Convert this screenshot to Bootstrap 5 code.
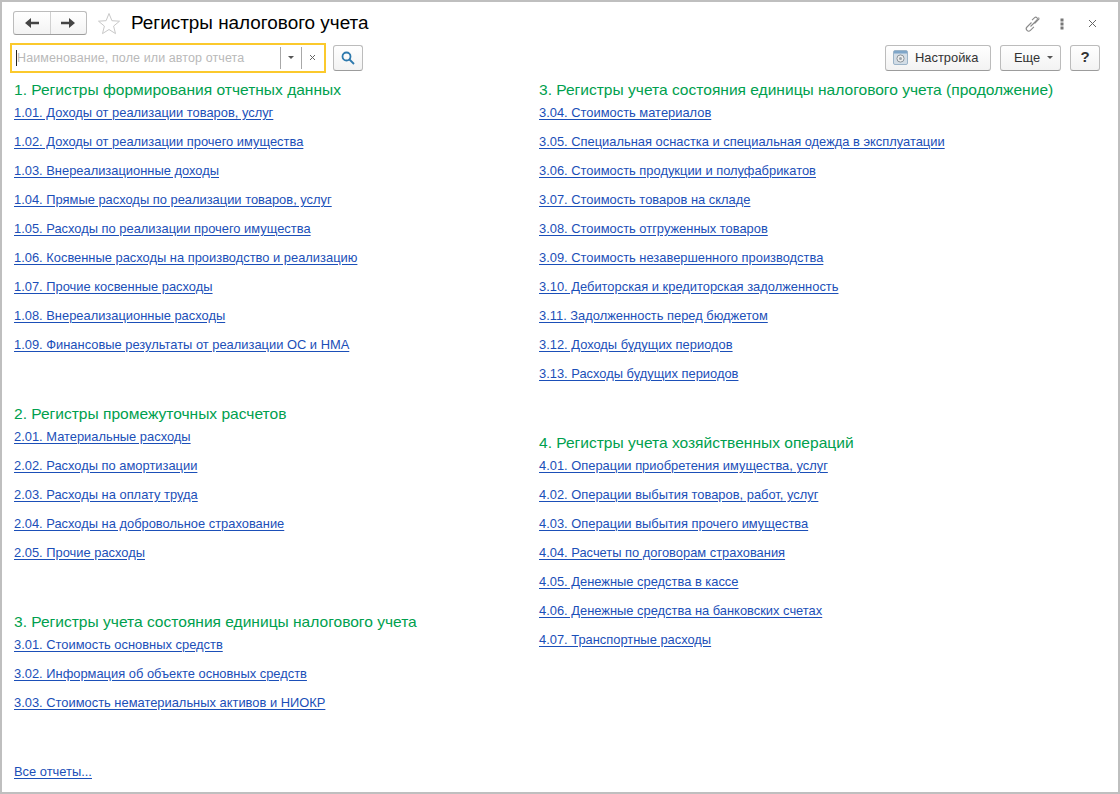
<!DOCTYPE html>
<html lang="ru">
<head>
<meta charset="utf-8">
<title>Регистры налогового учета</title>
<link rel="stylesheet" href="https://cdn.jsdelivr.net/npm/bootstrap@5.3.0/dist/css/bootstrap.min.css">
<style>
html,body{height:100%;margin:0;background:#fff}
body{font-family:"Liberation Sans",Arial,sans-serif;font-size:13px;color:#333;overflow:hidden}
.win{width:1120px;height:794px;border:2px solid #bfbfbf;background:#fff;padding:8px 10px 0 12px}
.titlebar{height:27px;margin-left:-1px}
.btn1c{background:linear-gradient(#fff,#f3f3f3);border:1px solid #bcbcbc;border-bottom-color:#9c9c9c;border-radius:3px;color:#333;font-size:12.9px;height:26px;padding:0;display:flex;align-items:center;justify-content:center;box-shadow:none}
.navgroup{width:74px;height:24px;margin-top:-1px}
.navgroup span{flex:1 1 0;height:100%;display:flex;align-items:center;justify-content:center}
.navgroup span+span{border-left:1px solid #d0d0d0}
.titletext{font-size:18.9px;color:#000;line-height:24px;margin-left:10px;margin-top:-1px}
.star{margin-left:10px}
.tools{height:33px;margin-left:-4px;margin-top:4px}
.searchbox{width:316px;height:30px;border:2px solid #fbc92c;display:flex;align-items:center;padding:3px 0 3px 4px}
.searchtext{flex:1;color:#b9b9b9;font-size:12.5px;letter-spacing:.1px;border-left:1px solid #222;height:16px;line-height:16px;white-space:nowrap}
.seg{width:21px;height:22px;border-left:1px solid #a8a8a8;display:flex;align-items:center;justify-content:center;color:#555}
.find{width:30px;margin-left:7px}
.setup{width:106px;gap:7px;justify-content:flex-start;padding-left:7px}
.more{width:61px;margin-left:9px;gap:7px;justify-content:flex-start;padding-left:13px}
.help{width:30px;margin-left:9px;margin-right:8px;font-weight:700;font-size:15px;color:#333}
.caret1c{width:0;height:0;border:3px solid transparent;border-top:3px solid #555;border-bottom:0}
.cols{height:712px;margin-top:6px}
.colleft{width:525px}
.colright{width:540px}
.group+.group{margin-top:45px}
.grouphead{height:18px;line-height:20px;font-size:15.55px;color:#00a04e;font-weight:400;margin:0}
.rowlink{height:29px;display:flex;align-items:center}
.rowlink a,.allrep{color:#1b4fb8;text-decoration:underline;text-underline-offset:2px;font-size:12.9px;white-space:nowrap}
.allrep{display:block;line-height:16px}
.foot{margin-top:auto;padding-bottom:12px}
</style>
</head>
<body>
<div class="win d-flex flex-column">
  <div class="titlebar d-flex align-items-center">
    <div class="btn1c navgroup">
      <span><svg width="14" height="10" viewBox="0 0 14 10" fill="#444"><path d="M0 5 6 0v3.800h8v2.400H6V10z"/></svg></span>
      <span><svg width="14" height="10" viewBox="0 0 14 10" fill="#444"><path d="M14 5 8 0v3.800H0v2.400h8V10z"/></svg></span>
    </div>
    <svg class="star" width="24" height="24" viewBox="0 0 24 24"><path d="M12 1.500l2.900 7.200 7.600.5-5.900 4.900 1.900 7.500L12 17.500l-6.500 4.100 1.900-7.500L1.500 9.200l7.600-.5z" fill="#fff" stroke="#c8c8c8" stroke-width="1"/></svg>
    <div class="titletext">Регистры налогового учета</div>
    <div class="ms-auto d-flex align-items-center">
      <svg width="18" height="18" viewBox="0 0 18 18" fill="none" stroke="#8a8a8a" stroke-width="1.100"><path d="M7.500 7.500 3 12a2.400 2.400 0 0 0 3.400 3.400l3.500-3.500"/><path d="M6.500 11.500 13 5a1.700 1.700 0 0 0-2.400-2.400L8 5.200"/><path d="M10.500 8.500 15 4a2.400 2.400 0 0 0-.5-1.500"/></svg>
      <svg style="margin-left:18px" width="4" height="12" viewBox="0 0 4 12" fill="#777"><rect x=".5" y=".5" width="3" height="3"/><rect x=".5" y="4.500" width="3" height="3"/><rect x=".5" y="8.500" width="3" height="3"/></svg>
      <svg style="margin-left:24px;margin-right:11px" width="9" height="9" viewBox="0 0 9 9" stroke="#666" stroke-width="1"><path d="M1 1l7 7M8 1l-7 7"/></svg>
    </div>
  </div>
  <div class="tools d-flex align-items-center">
    <div class="searchbox">
      <div class="searchtext">Наименование, поле или автор отчета</div>
      <div class="seg"><span class="caret1c"></span></div>
      <div class="seg"><svg width="7" height="7" viewBox="0 0 7 7" stroke="#666" stroke-width="1"><path d="M1 1l5 5M6 1 1 6"/></svg></div>
      <div style="width:2px"></div>
    </div>
    <div class="btn1c find"><svg width="14" height="14" viewBox="0 0 14 14" fill="none" stroke="#2d79ad" stroke-width="1.800"><circle cx="5.500" cy="5.500" r="4"/><path d="M8.500 8.500l4.500 4.500"/></svg></div>
    <div class="btn1c setup ms-auto">
      <svg width="15" height="15" viewBox="0 0 15 15"><rect x=".5" y=".5" width="14" height="14" rx="1.500" fill="#d3dde6" stroke="#9cb4c8"/><rect x="1" y="1" width="13" height="2.500" fill="#7fa6c9"/><circle cx="7.500" cy="8.500" r="3.600" fill="#eee" stroke="#8b949b"/><circle cx="7.500" cy="8.500" r="1.500" fill="#9aa3aa"/></svg>
      <span>Настройка</span>
    </div>
    <div class="btn1c more"><span>Еще</span><span class="caret1c"></span></div>
    <div class="btn1c help">?</div>
  </div>
  <div class="cols d-flex">
    <div class="colleft d-flex flex-column">
      <section class="group">
        <h2 class="grouphead">1. Регистры формирования отчетных данных</h2>
        <div class="rowlink"><a href="#">1.01. Доходы от реализации товаров, услуг</a></div>
        <div class="rowlink"><a href="#">1.02. Доходы от реализации прочего имущества</a></div>
        <div class="rowlink"><a href="#">1.03. Внереализационные доходы</a></div>
        <div class="rowlink"><a href="#">1.04. Прямые расходы по реализации товаров, услуг</a></div>
        <div class="rowlink"><a href="#">1.05. Расходы по реализации прочего имущества</a></div>
        <div class="rowlink"><a href="#">1.06. Косвенные расходы на производство и реализацию</a></div>
        <div class="rowlink"><a href="#">1.07. Прочие косвенные расходы</a></div>
        <div class="rowlink"><a href="#">1.08. Внереализационные расходы</a></div>
        <div class="rowlink"><a href="#">1.09. Финансовые результаты от реализации ОС и НМА</a></div>
      </section>
      <section class="group">
        <h2 class="grouphead">2. Регистры промежуточных расчетов</h2>
        <div class="rowlink"><a href="#">2.01. Материальные расходы</a></div>
        <div class="rowlink"><a href="#">2.02. Расходы по амортизации</a></div>
        <div class="rowlink"><a href="#">2.03. Расходы на оплату труда</a></div>
        <div class="rowlink"><a href="#">2.04. Расходы на добровольное страхование</a></div>
        <div class="rowlink"><a href="#">2.05. Прочие расходы</a></div>
      </section>
      <section class="group">
        <h2 class="grouphead">3. Регистры учета состояния единицы налогового учета</h2>
        <div class="rowlink"><a href="#">3.01. Стоимость основных средств</a></div>
        <div class="rowlink"><a href="#">3.02. Информация об объекте основных средств</a></div>
        <div class="rowlink"><a href="#">3.03. Стоимость нематериальных активов и НИОКР</a></div>
      </section>
      <div class="foot"><a class="allrep" href="#">Все отчеты...</a></div>
    </div>
    <div class="colright">
      <section class="group">
        <h2 class="grouphead">3. Регистры учета состояния единицы налогового учета (продолжение)</h2>
        <div class="rowlink"><a href="#">3.04. Стоимость материалов</a></div>
        <div class="rowlink"><a href="#">3.05. Специальная оснастка и специальная одежда в эксплуатации</a></div>
        <div class="rowlink"><a href="#">3.06. Стоимость продукции и полуфабрикатов</a></div>
        <div class="rowlink"><a href="#">3.07. Стоимость товаров на складе</a></div>
        <div class="rowlink"><a href="#">3.08. Стоимость отгруженных товаров</a></div>
        <div class="rowlink"><a href="#">3.09. Стоимость незавершенного производства</a></div>
        <div class="rowlink"><a href="#">3.10. Дебиторская и кредиторская задолженность</a></div>
        <div class="rowlink"><a href="#">3.11. Задолженность перед бюджетом</a></div>
        <div class="rowlink"><a href="#">3.12. Доходы будущих периодов</a></div>
        <div class="rowlink"><a href="#">3.13. Расходы будущих периодов</a></div>
      </section>
      <section class="group">
        <h2 class="grouphead">4. Регистры учета хозяйственных операций</h2>
        <div class="rowlink"><a href="#">4.01. Операции приобретения имущества, услуг</a></div>
        <div class="rowlink"><a href="#">4.02. Операции выбытия товаров, работ, услуг</a></div>
        <div class="rowlink"><a href="#">4.03. Операции выбытия прочего имущества</a></div>
        <div class="rowlink"><a href="#">4.04. Расчеты по договорам страхования</a></div>
        <div class="rowlink"><a href="#">4.05. Денежные средства в кассе</a></div>
        <div class="rowlink"><a href="#">4.06. Денежные средства на банковских счетах</a></div>
        <div class="rowlink"><a href="#">4.07. Транспортные расходы</a></div>
      </section>
    </div>
  </div>
</div>
<script src="https://cdn.jsdelivr.net/npm/bootstrap@5.3.0/dist/js/bootstrap.bundle.min.js"></script>
</body>
</html>
